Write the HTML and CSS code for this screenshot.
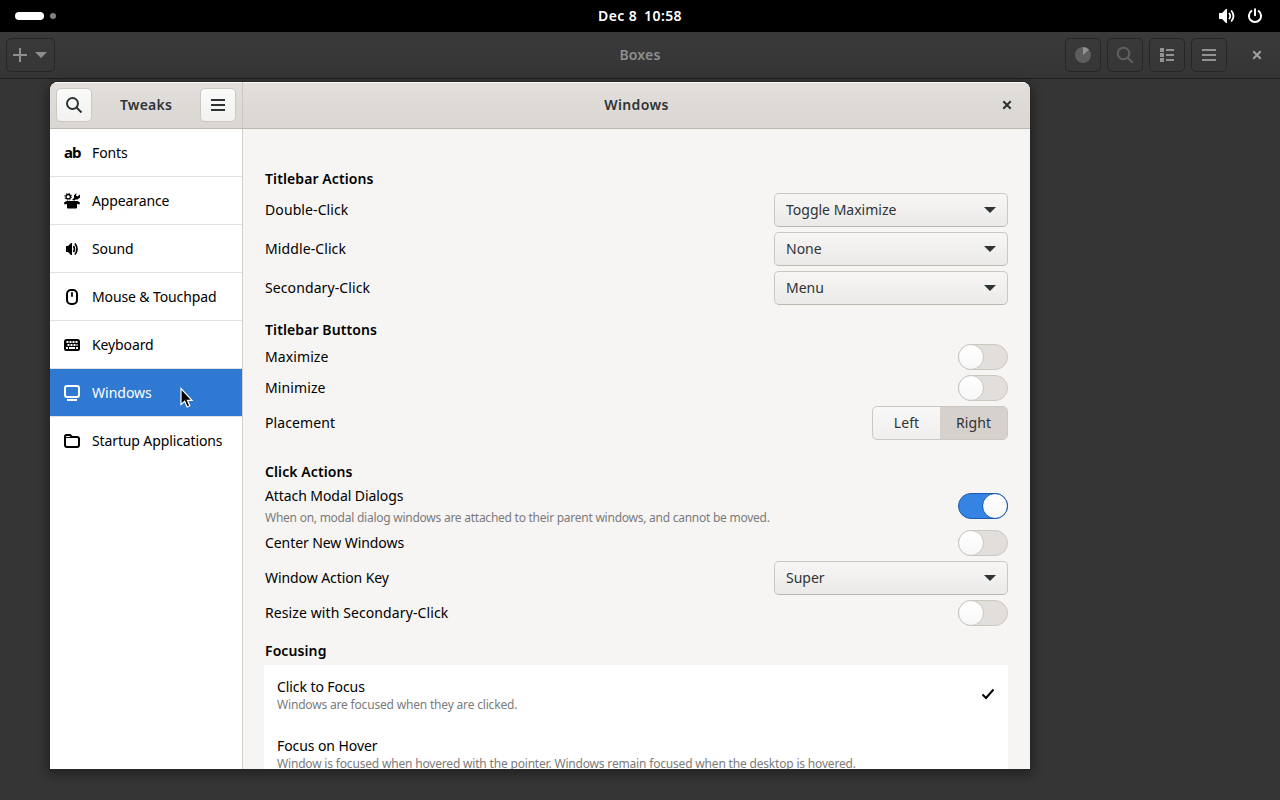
FILE: index.html
```html
<!DOCTYPE html>
<html lang="en">
<head>
  <meta charset="UTF-8" />
  <title>Tweaks</title>
  <link rel="stylesheet" href="styles.css">
</head>
<body>
  <div class="topbar">
    <div class="workspaces"><span class="pill"></span><span class="dot"></span></div>
    <div class="clock"><span>Dec 8</span><span>10:58</span></div>
    <div class="status">
      <svg width="18" height="16" viewBox="0 0 18 16"><path d="M1 5h3l4-4h1v14H8l-4-4H1z" fill="#fff"/><path d="M11 5q2.500 3 0 6M13.200 2.500q4.600 5.500 0 11" fill="none" stroke="#fff" stroke-width="1.800"/></svg>
      <svg width="16" height="16" viewBox="0 0 16 16" fill="none" stroke="#fff" stroke-width="2" stroke-linecap="round"><path d="M4.400 3a6.100 6.100 0 1 0 7.200 0M8 1.200v6"/></svg>
    </div>
  </div>

  <div class="boxes-header">
    <div class="dark-button new">
      <svg width="16" height="16" viewBox="0 0 16 16"><path d="M8 1v14M1 8h14" stroke="#8f8f8f" stroke-width="2"/></svg>
      <svg width="12" height="6" viewBox="0 0 12 6"><path d="M0 0h12L6 6z" fill="#8f8f8f"/></svg>
    </div>
    <div class="boxes-title">Boxes</div>
    <div class="boxes-tools">
      <div class="dark-button"><svg width="16" height="16" viewBox="0 0 16 16"><circle cx="8" cy="8" r="8" fill="#5d5d5d"/><path d="M8 8V0a8 8 0 0 1 6 2.700z" fill="#929292"/></svg></div>
      <div class="dark-button"><svg width="18" height="18" viewBox="0 0 18 18" fill="none" stroke="#606060" stroke-width="2"><circle cx="7.500" cy="7.500" r="5.800"/><path d="M11.800 11.800l5 5"/></svg></div>
      <div class="dark-button"><svg width="16" height="16" viewBox="0 0 16 16" fill="#929292"><path d="M1 1h4v4H1zM1 6h4v4H1zM1 11h4v4H1zM7 2h8v2H7zM7 7h8v2H7zM7 12h8v2H7z"/></svg></div>
      <div class="dark-button"><svg width="16" height="16" viewBox="0 0 16 16"><path d="M1 3h14M1 8h14M1 13h14" stroke="#929292" stroke-width="2"/></svg></div>
      <svg class="boxes-close" width="10" height="10" viewBox="0 0 10 10"><path d="M1.300 1.300l7.400 7.400M8.700 1.300L1.300 8.700" stroke="#a0a0a0" stroke-width="2.100"/></svg>
    </div>
  </div>

  <div class="window">
    <div class="titlebar">
      <div class="titlebar-left">
        <div class="icon-button"><svg width="18" height="18" viewBox="0 0 18 18" fill="none" stroke="#2e3436" stroke-width="2"><circle cx="7.500" cy="7.500" r="5.500"/><path d="M11.500 11.500l5 5"/></svg></div>
        <div class="title">Tweaks</div>
        <div class="icon-button"><svg width="16" height="16" viewBox="0 0 16 16"><path d="M1 3h14M1 8h14M1 13h14" stroke="#2e3436" stroke-width="2"/></svg></div>
      </div>
      <div class="titlebar-right">
        <div class="title">Windows</div>
        <svg class="close" width="10" height="10" viewBox="0 0 10 10"><path d="M1.300 1.300l7.400 7.400M8.700 1.300L1.300 8.700" stroke="#2e3436" stroke-width="2.100"/></svg>
      </div>
    </div>

    <div class="main">
      <div class="sidebar">
        <div class="side-item">
          <span class="font-icon">ab</span>
          <span>Fonts</span>
        </div>
        <div class="side-item">
          <svg width="16" height="16" viewBox="0 0 16 16"><circle cx="4.200" cy="3.700" r="2.200" fill="none" stroke="#000" stroke-width="1.300"/><circle cx="4.200" cy="3.700" r="3.400" fill="none" stroke="#000" stroke-width="1" stroke-dasharray="1.200 1.470"/><path d="M8 7l2-2V2.200L12.500 0 12 2.500l1.500 1L16 1.500v3L13.500 6.500h-2L10.500 7.500zM2.500 8h11l2.500 1.500-.5 2-2.500-.5v3.500a1 1 0 0 1-1 1H4a1 1 0 0 1-1-1V11l-2.500.5-.5-2z"/></svg>
          <span>Appearance</span>
        </div>
        <div class="side-item">
          <svg width="16" height="16" viewBox="0 0 16 16"><path d="M2 5h2l3-3h1v12H7l-3-3H2z"/><path d="M9.500 5q2 3 0 6" fill="none" stroke="#000" stroke-width="1.600"/><path d="M11 2.500q4 5.500 0 11" fill="none" stroke="#000" stroke-width="1.700"/></svg>
          <span>Sound</span>
        </div>
        <div class="side-item">
          <svg width="16" height="16" viewBox="0 0 16 16" fill="none" stroke="#000" stroke-width="2"><rect x="3" y="1" width="10" height="14" rx="4"/><path d="M8 4v3" stroke-linecap="round" stroke-width="1.800"/></svg>
          <span>Mouse &amp; Touchpad</span>
        </div>
        <div class="side-item">
          <svg width="16" height="16" viewBox="0 0 16 16"><rect x="0" y="2" width="16" height="12" rx="2.500"/><path d="M2.500 5h11M3.500 8h10" stroke="#fff" stroke-width="2" stroke-dasharray="2 1"/><path d="M2 11h2M5 11h6M12 11h2" stroke="#fff" stroke-width="2"/></svg>
          <span>Keyboard</span>
        </div>
        <div class="side-item selected">
          <svg width="16" height="16" viewBox="0 0 16 16"><rect x="1" y="1" width="14" height="11" rx="2" fill="none" stroke="#fff" stroke-width="2"/><path d="M3 15h10" stroke="#fff" stroke-width="2"/></svg>
          <span>Windows</span>
        </div>
        <div class="side-item">
          <svg width="16" height="16" viewBox="0 0 16 16" fill="none" stroke="#000" stroke-width="2"><path d="M1 12V3.500A1.500 1.500 0 0 1 2.500 2H6l2 2h5a2 2 0 0 1 2 2v6a2 2 0 0 1-2 2H3a2 2 0 0 1-2-2z"/><path d="M1 4.500h7" stroke-width="1"/></svg>
          <span>Startup Applications</span>
        </div>
      </div>

      <div class="content">
        <div class="section">
          <h2>Titlebar Actions</h2>
          <div class="row"><span>Double-Click</span><div class="combo">Toggle Maximize</div></div>
          <div class="row"><span>Middle-Click</span><div class="combo">None</div></div>
          <div class="row"><span>Secondary-Click</span><div class="combo">Menu</div></div>
        </div>

        <div class="section">
          <h2>Titlebar Buttons</h2>
          <div class="row"><span>Maximize</span><div class="switch"></div></div>
          <div class="row"><span>Minimize</span><div class="switch"></div></div>
          <div class="row"><span>Placement</span><div class="linked"><div>Left</div><div class="active">Right</div></div></div>
        </div>

        <div class="section click-actions">
          <h2>Click Actions</h2>
          <div class="row attach">
            <div>
              <div class="label">Attach Modal Dialogs</div>
              <div class="desc">When on, modal dialog windows are attached to their parent windows, and cannot be moved.</div>
            </div>
            <div class="switch on"></div>
          </div>
          <div class="row"><span class="label">Center New Windows</span><div class="switch"></div></div>
          <div class="row"><span class="label">Window Action Key</span><div class="combo">Super</div></div>
          <div class="row"><span>Resize with Secondary-Click</span><div class="switch"></div></div>
        </div>

        <div class="section">
          <h2>Focusing</h2>
          <div class="focus-list">
            <div class="focus-item">
              <div>
                <div class="label">Click to Focus</div>
                <div class="desc">Windows are focused when they are clicked.</div>
              </div>
              <svg class="check" width="16" height="16" viewBox="0 0 16 16"><path d="M2.500 8.500l3.500 3.500L13.500 3.500" fill="none" stroke="#000" stroke-width="2"/></svg>
            </div>
            <div class="focus-item">
              <div>
                <div class="label">Focus on Hover</div>
                <div class="desc">Window is focused when hovered with the pointer. Windows remain focused when the desktop is hovered.</div>
              </div>
            </div>
          </div>
        </div>
      </div>
    </div>
  </div>

  <svg class="cursor" width="14" height="22" viewBox="0 0 14 22"><path d="M1 1.500v16l3.700-3.200 2.400 5.700 2.700-1.200-2.400-5.500h4.600z" fill="#000" stroke="#fff" stroke-width="1.200"/></svg>
</body>
</html>
```

FILE: styles.css
```css
*, *::before, *::after {
  box-sizing: border-box;
}
body {
  margin: 0;
  height: 800px;
  overflow: hidden;
  background: #353535;
  color: #000;
  font-family: "Noto Sans", sans-serif;
  font-size: 14px;
  line-height: 20px;
}
svg {
  display: block;
  flex: none;
}
.topbar {
  display: grid;
  grid-template-columns: 1fr auto 1fr;
  align-items: center;
  height: 32px;
  padding: 0 17px 0 15px;
  background: #000;
  color: #fff;
}
.workspaces {
  display: flex;
  align-items: center;
  gap: 6px;
}
.pill {
  width: 29px;
  height: 8px;
  border-radius: 4px;
  background: #fff;
}
.dot {
  width: 6px;
  height: 6px;
  border-radius: 50%;
  background: #808080;
}
.clock {
  display: flex;
  gap: 7px;
  padding-left: 2px;
  font-weight: 600;
  letter-spacing: 0.4px;
}
.status {
  display: flex;
  justify-content: flex-end;
  gap: 11px;
}

.boxes-header {
  display: grid;
  grid-template-columns: 1fr auto 1fr;
  align-items: center;
  height: 47px;
  padding: 0 18px;
  background: linear-gradient(#3a3a3a, #353535);
  border-bottom: 1px solid #202020;
}
.boxes-title {
  color: #8f8f8f;
  font-weight: 600;
  letter-spacing: 0.2px;
}
.boxes-tools {
  display: flex;
  align-items: center;
  justify-content: flex-end;
  gap: 6px;
}
.dark-button {
  display: flex;
  align-items: center;
  justify-content: center;
  width: 36px;
  height: 34px;
  border: 1px solid #262626;
  border-radius: 5px;
}
.new {
  width: 49px;
  margin-left: -12px;
  padding-right: 2px;
  gap: 7px;
}
.boxes-close {
  margin-left: 19px;
}

.window {
  position: absolute;
  left: 50px;
  top: 82px;
  width: 980px;
  height: 687px;
  display: flex;
  flex-direction: column;
  overflow: hidden;
  border-radius: 8px 8px 0 0;
  background: #f6f5f4;
  box-shadow: 0 0 0 1px #272727, 0 3px 12px 2px rgba(0, 0, 0, 0.4);
}
.titlebar {
  display: flex;
  height: 47px;
  background: linear-gradient(#e2dfdc, #dad6d2);
  border-bottom: 1px solid #bfb8b1;
  box-shadow: inset 0 1px #f8f7f6;
  color: #2e3436;
}
.titlebar-left {
  display: flex;
  align-items: center;
  justify-content: space-between;
  width: 193px;
  padding: 0 6px;
  border-right: 1px solid #cdc7c2;
}
.titlebar-right {
  flex: 1;
  display: grid;
  grid-template-columns: 1fr auto 1fr;
  align-items: center;
  padding: 0 18px;
}
.title {
  font-weight: 600;
  letter-spacing: 0.2px;
}
.titlebar-right .title {
  grid-column: 2;
  letter-spacing: 0.4px;
}
.close {
  justify-self: end;
}
.icon-button {
  display: flex;
  align-items: center;
  justify-content: center;
  width: 36px;
  height: 34px;
  border: 1px solid #cdc7c2;
  border-radius: 5px;
  background: linear-gradient(#fafafa, #f3f2f1);
}
.main {
  flex: 1;
  display: flex;
  min-height: 0;
}
.sidebar {
  width: 193px;
  background: #fff;
  border-right: 1px solid #d5d0cc;
}
.side-item {
  display: flex;
  align-items: center;
  gap: 12px;
  height: 48px;
  padding-left: 14px;
  border-bottom: 1px solid #e1e1e1;
  letter-spacing: -0.12px;
  white-space: nowrap;
}
.side-item.selected {
  background: #3079d3;
  color: #fff;
  letter-spacing: 0;
}
.side-item:last-child {
  border-bottom-color: transparent;
}
.font-icon {
  width: 16px;
  margin-top: -2px;
  font-size: 15px;
  font-weight: 700;
  letter-spacing: -1px;
}
.content {
  flex: 1;
  padding: 39px 22px 0;
  overflow: hidden;
}
.section {
  display: flex;
  flex-direction: column;
  gap: 5px;
  margin-bottom: 14px;
}
.section.click-actions {
  margin-top: 21px;
}
h2 {
  margin: 0;
  font-size: 14px;
  line-height: 22px;
  height: 20px;
  font-weight: 600;
  letter-spacing: 0.1px;
}
.row {
  display: flex;
  align-items: center;
  justify-content: space-between;
  letter-spacing: 0.1px;
}
.label {
  letter-spacing: -0.08px;
}
.attach {
  height: 39px;
}
.attach .label {
  margin-top: 2px;
}
.desc {
  color: #7b7b7b;
  font-size: 12px;
  letter-spacing: -0.18px;
}
.attach .desc {
  margin-top: 2px;
  letter-spacing: -0.25px;
}
.combo {
  display: flex;
  align-items: center;
  justify-content: space-between;
  width: 234px;
  height: 34px;
  padding: 0 11px;
  border: 1px solid #cdc7c2;
  border-bottom-color: #bfb8b1;
  border-radius: 5px;
  background: linear-gradient(#f7f6f5, #ebeae8);
  color: #2e3436;
  letter-spacing: 0;
}
.combo::after {
  content: "";
  border: 6px solid transparent;
  border-top-color: #2e3436;
  border-bottom: 0;
}
.switch {
  display: flex;
  width: 50px;
  height: 26px;
  border: 1px solid #cdc7c2;
  border-radius: 13px;
  background: #e1dedb;
}
.switch::before {
  content: "";
  flex: none;
  width: 26px;
  height: 26px;
  margin: -1px;
  border: 1px solid #cdc7c2;
  border-radius: 50%;
  background: linear-gradient(#fff, #f8f7f7);
}
.switch.on {
  justify-content: flex-end;
  background: #3584e4;
  border-color: #1b5aac;
}
.switch.on::before {
  border-color: #1b5aac;
}
.linked {
  display: flex;
  width: 136px;
  height: 34px;
  border: 1px solid #cdc7c2;
  border-radius: 5px;
  overflow: hidden;
  background: linear-gradient(#f9f8f8, #f0efed);
  color: #2e3436;
  line-height: 32px;
  text-align: center;
}
.linked div {
  flex: 1;
}
.linked .active {
  background: #d6d1cd;
}
.focus-list {
  margin-left: -1px;
  background: #fff;
}
.focus-item {
  display: flex;
  align-items: center;
  justify-content: space-between;
  height: 59px;
  padding: 0 12px 0 13px;
}
.focus-item .desc {
  line-height: 16px;
}
.check {
  margin-bottom: 2px;
}
.cursor {
  position: absolute;
  left: 180px;
  top: 387px;
}
```
